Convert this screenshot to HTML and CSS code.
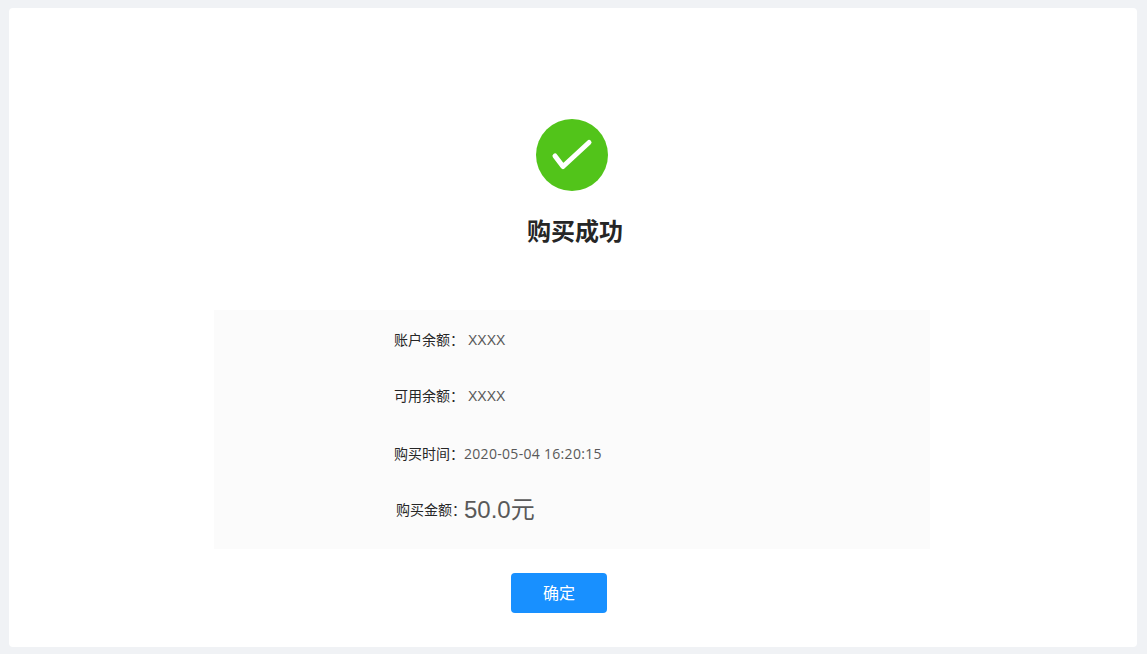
FILE: index.html
```html
<!DOCTYPE html>
<html lang="zh-CN">
<head>
<meta charset="utf-8">
<title>购买成功</title>
<link rel="stylesheet" href="styles.css">
</head>
<body>
<main class="card">
  <div class="result-icon">
    <svg viewBox="0 0 72 72" width="72" height="72" aria-hidden="true">
      <circle cx="36" cy="36" r="36" fill="#52c41a"/>
      <path d="M19 37 L27 47.5 L53 23.5" fill="none" stroke="#fff" stroke-width="5" stroke-linecap="round" stroke-linejoin="round"/>
    </svg>
  </div>
  <h1 class="title">购买成功</h1>
  <section class="panel">
    <div class="row row-balance"><span class="label">账户余额：</span><span class="value value-x">XXXX</span></div>
    <div class="row row-available"><span class="label">可用余额：</span><span class="value value-x">XXXX</span></div>
    <div class="row row-time"><span class="label">购买时间：</span><span class="value value-time">2020-05-04 16:20:15</span></div>
    <div class="row row-amount"><span class="label label-amount">购买金额：</span><span class="value value-amount">50.0元</span></div>
  </section>
  <div class="actions"><button class="btn" type="button">确定</button></div>
</main>
</body>
</html>
```

FILE: styles.css
```css
* { box-sizing: border-box; }
html, body { height: 100%; }
body {
  margin: 0;
  padding: 8px 10px 7px 9px;
  background: #f0f2f5;
  font-family: "Liberation Sans", "Noto Sans CJK SC", sans-serif;
  overflow: hidden;
}
.card {
  height: 639px;
  background: #fff;
  border-radius: 4px;
  padding-top: 111px;
  display: flex;
  flex-direction: column;
}
.result-icon {
  height: 72px;
  margin-left: 527px;
  line-height: 0;
}
.title {
  margin: 23px 0 0 518px;
  font-size: 24px;
  line-height: 36px;
  font-weight: 700;
  color: #262626;
}
.panel {
  width: 716px;
  height: 239px;
  margin: 60px 0 0 205px;
  padding-left: 180px;
  background: #fbfbfb;
  display: flex;
  flex-direction: column;
}
.row {
  display: flex;
  align-items: center;
  height: 22px;
  font-size: 14px;
  line-height: 22px;
}
.row-balance { margin-top: 19px; }
.row-available { margin-top: 34px; }
.row-time { margin-top: 36px; }
.row-amount { margin-top: 27px; height: 36px; }
.label { color: #262626; width: 70px; white-space: nowrap; }
.label-amount { padding-left: 2px; }
.value { color: #595959; }
.value-x { margin-left: 4px; }
.value-time { font-family: "Open Sans", sans-serif; letter-spacing: 0.3px; }
.value-amount { font-size: 24px; line-height: 36px; }
.actions { margin: 24px 0 0 502px; }
.btn {
  display: block;
  width: 96px;
  height: 40px;
  padding: 1px 0 0;
  border: 0;
  border-radius: 4px;
  background: #1890ff;
  color: #fff;
  font: 16px/39px "Liberation Sans", "Noto Sans CJK SC", sans-serif;
}
```
